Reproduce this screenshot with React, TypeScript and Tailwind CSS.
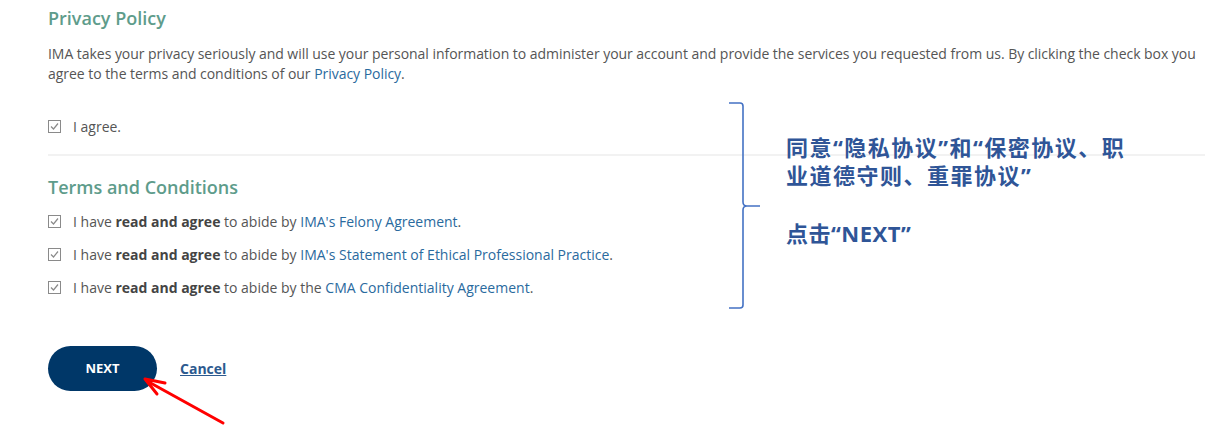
import React from 'react';

const Check = () => (
  <svg width="13" height="13" viewBox="0 0 13 13" className="shrink-0">
    <rect x="0.5" y="0.5" width="12" height="12" fill="#fff" stroke="#8a8a8a" />
    <path d="M3 6.5 L5.5 9 L10 3.5" fill="none" stroke="#8a8a8a" strokeWidth="1.2" />
  </svg>
);

const Row = ({ children }: { children: React.ReactNode }) => (
  <div className="flex items-center gap-[12px] h-[33px]">
    <Check />
    <span>{children}</span>
  </div>
);

const App = () => {
  return (
    <div
      className="relative w-[1205px] h-[440px] bg-white overflow-hidden text-[14px] text-[#555]"
      style={{ fontFamily: '"Open Sans", sans-serif' }}
    >
      <div className="pl-[48px] pt-[6px]">
        {/* Privacy */}
        <h2 className="text-[18px] font-semibold text-[#5e9c8b] leading-[24px]">Privacy Policy</h2>
        <p className="mt-[14px] leading-[20px] w-[1156px] tracking-[-0.04px]">
          IMA takes your privacy seriously and will use your personal information to administer your account and provide the services you requested from us. By clicking the check box you agree to the terms and conditions of our{' '}
          <span className="text-[#2a6a9e]">Privacy Policy</span>.
        </p>
        <div className="mt-[26px]">
          <Row>I agree.</Row>
        </div>
        <div className="mt-[11px] h-[2px] bg-[#f2f2f2]" />

        {/* Terms */}
        <h2 className="mt-[19px] text-[18px] font-semibold text-[#5e9c8b] leading-[24px]">Terms and Conditions</h2>
        <div className="mt-[6px]">
          <Row>
            I have <b className="font-bold text-[#444]">read and agree</b> to abide by{' '}
            <span className="text-[#2a6a9e]">IMA's Felony Agreement</span>.
          </Row>
          <Row>
            I have <b className="font-bold text-[#444]">read and agree</b> to abide by{' '}
            <span className="text-[#2a6a9e]">IMA's Statement of Ethical Professional Practice</span>.
          </Row>
          <Row>
            I have <b className="font-bold text-[#444]">read and agree</b> to abide by the{' '}
            <span className="text-[#2a6a9e]">CMA Confidentiality Agreement</span>.
          </Row>
        </div>

        <div className="mt-[42px] flex items-center gap-[23px]">
          <button className="w-[109px] h-[45px] rounded-full bg-[#003768] text-white font-bold text-[13px]">
            NEXT
          </button>
          <a className="text-[#2c5a8f] font-bold underline text-[14px]">Cancel</a>
        </div>
      </div>

      {/* annotation brace */}
      <svg className="absolute left-[725px] top-[98px]" width="45" height="216" viewBox="0 0 45 216">
        <path
          d="M4 5 H15 Q18 5 18 8 V104 Q18 108 22 108 H35 M22 108 Q18 108 18 112 V207 Q18 210 15 210 H4"
          fill="none"
          stroke="#4472c4"
          strokeWidth="1.6"
        />
      </svg>
      <div
        className="absolute left-[786px] top-[133px] text-[22px] font-bold text-[#2f5597] leading-[28px] tracking-[1.5px]"
        style={{ fontFamily: '"Open Sans", "Noto Sans CJK SC", sans-serif' }}
      >
        <div>同意“隐私协议”和“保密协议、职</div>
        <div>业道德守则、重罪协议”</div>
        <div className="mt-[30px] tracking-[0.5px]">点击“NEXT”</div>
      </div>

      {/* red arrow */}
      <svg className="absolute left-[137px] top-[371px]" width="90" height="60" viewBox="0 0 90 60">
        <path d="M86 52 L10 10" stroke="#ff0000" strokeWidth="3" strokeLinecap="round" />
        <path d="M8 8 L28 12 M8 8 L20 23" stroke="#ff0000" strokeWidth="3" strokeLinecap="round" />
      </svg>
    </div>
  );
};

export default App;
